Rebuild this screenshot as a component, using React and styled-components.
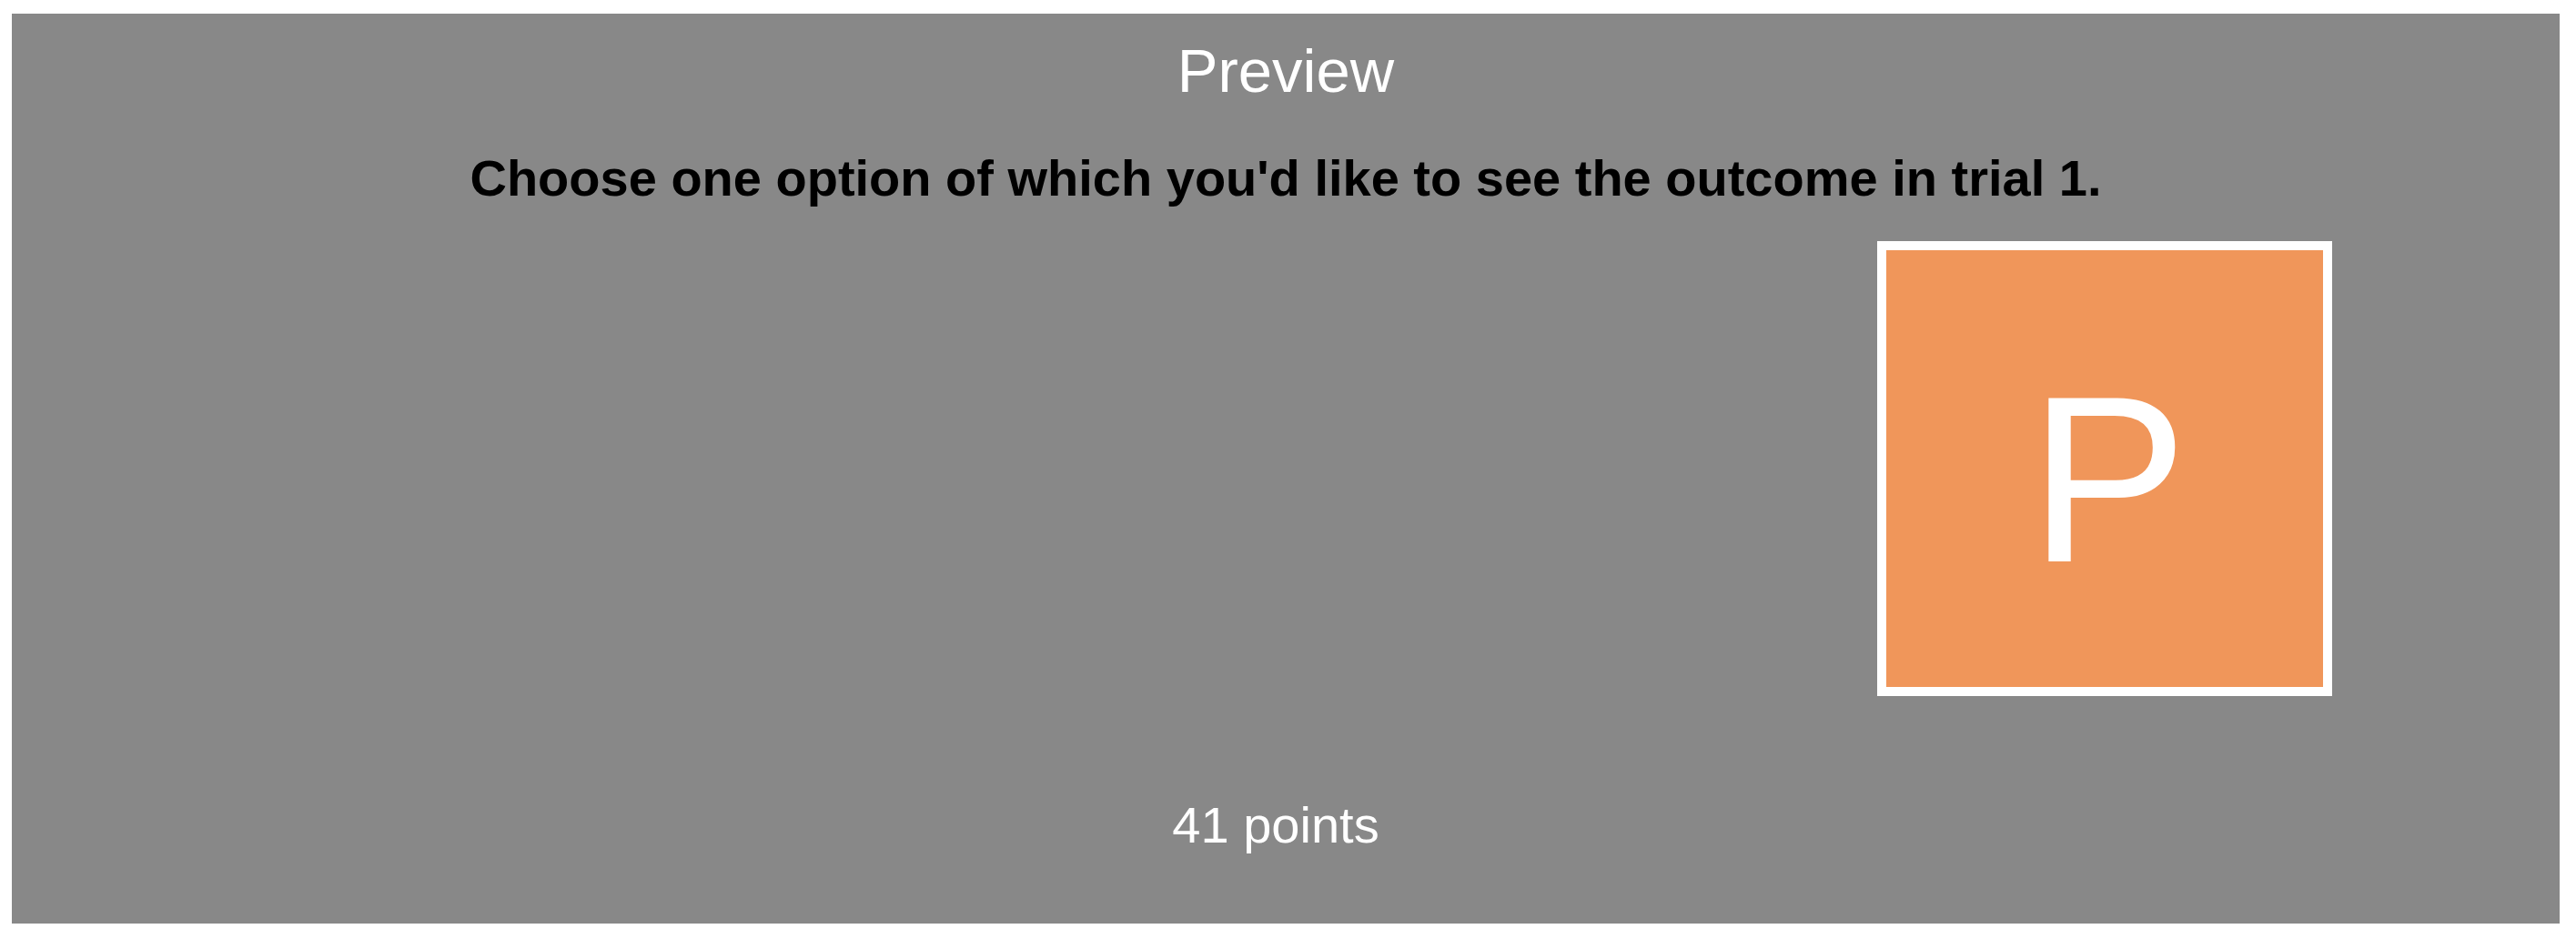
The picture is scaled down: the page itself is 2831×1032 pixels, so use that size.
import React from 'react'
import styled, { createGlobalStyle } from 'styled-components'

const GlobalStyle = createGlobalStyle`
body{
    margin: 0;
    background: #ffffff;
    font-family: 'Liberation Sans', Arial, sans-serif;
}
`

const options = [
    { id: 'left', label: '', hidden: true },
    { id: 'right', label: 'P', hidden: false },
]

const App = () => {
    return (
        <>
            <GlobalStyle />
            <Stage>
                <Title>Preview</Title>
                <Prompt>Choose one option of which you'd like to see the outcome in trial 1.</Prompt>
                <OptionRow>
                    {options.map((option) => (
                        <OptionCard key={option.id} hidden={option.hidden}>
                            <OptionLetter>{option.label}</OptionLetter>
                        </OptionCard>
                    ))}
                </OptionRow>
                <Points>41 points</Points>
            </Stage>
        </>
    )
}

const Stage = styled.div`
width: 2800px;
height: 1000px;
margin: 15px 0 0 13px;
padding-top: 24px;
box-sizing: border-box;
background: #888888;
display: flex;
flex-direction: column;
align-items: center;
`

const Title = styled.h1`
margin: 0;
font-size: 67px;
line-height: 77px;
font-weight: normal;
color: #ffffff;
`

const Prompt = styled.p`
margin: 48px 0 0;
font-size: 56px;
line-height: 64px;
font-weight: bold;
color: #000000;
`

const OptionRow = styled.div`
width: 100%;
box-sizing: border-box;
margin-top: 37px;
padding: 0 250px;
display: flex;
justify-content: space-between;
`

const OptionCard = styled.div`
width: 500px;
height: 500px;
box-sizing: border-box;
border: 10px solid #ffffff;
background: #f0965a;
display: flex;
align-items: center;
justify-content: center;
visibility: ${(props) => (props.hidden ? 'hidden' : 'visible')};
`

const OptionLetter = styled.span`
font-size: 261px;
line-height: 261px;
padding-top: 22px;
padding-left: 8px;
color: #ffffff;
`

const Points = styled.div`
margin-top: 110px;
padding-right: 22px;
font-size: 56px;
line-height: 64px;
color: #ffffff;
`

export default App
